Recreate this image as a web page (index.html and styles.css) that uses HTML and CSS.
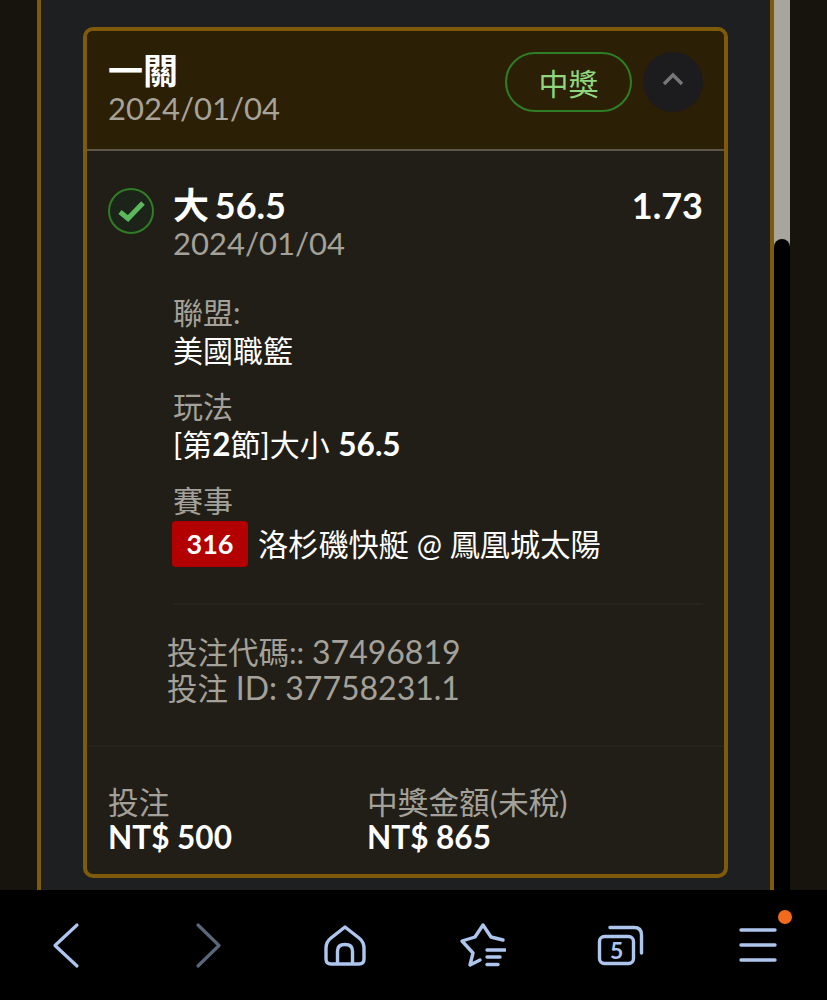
FILE: index.html
```html
<!DOCTYPE html>
<html lang="zh-TW">
<head>
  <meta charset="UTF-8" />
  <meta name="viewport" content="width=device-width, initial-scale=1.0"/>
  <title>投注紀錄</title>
  <link rel="stylesheet" href="styles.css">
</head>
<body>
  <div class="screen">
    <div class="side-left"></div>
    <main class="panel">
      <section class="bet-card">
        <header class="bet-head">
          <div class="bet-head-text">
            <div class="bet-type">一關</div>
            <div class="bet-date">2024/01/04</div>
          </div>
          <span class="win-pill">中獎</span>
          <button class="collapse-btn" aria-label="收合">
            <svg width="24" height="16" viewBox="0 0 24 16"><path d="M3 13 L12 4 L21 13" fill="none" stroke="#77777a" stroke-width="3.4"/></svg>
          </button>
        </header>

        <div class="bet-body">
          <div class="pick-row">
            <svg class="pick-check" width="46" height="46" viewBox="0 0 46 46">
              <circle cx="23" cy="23" r="22" fill="#1c2419" stroke="#2f7d24" stroke-width="2"/>
              <path d="M12 24 L20 30.5 L35 15" fill="none" stroke="#5cb85c" stroke-width="5"/>
            </svg>
            <div class="pick-main">
              <div class="pick-top">
                <span class="pick-name">大 56.5</span>
                <span class="pick-odds">1.73</span>
              </div>
              <div class="pick-date">2024/01/04</div>
              <div class="info-block">
                <div class="info-label">聯盟:</div>
                <div class="info-value">美國職籃</div>
              </div>
              <div class="info-block">
                <div class="info-label">玩法</div>
                <div class="info-value">[第<b>2</b>節]大小 <b>56.5</b></div>
              </div>
              <div class="info-block">
                <div class="info-label">賽事</div>
                <div class="info-value match">
                  <span class="match-no">316</span>
                  <span>洛杉磯快艇 @ 鳳凰城太陽</span>
                </div>
              </div>
            </div>
          </div>

          <div class="bet-ids">
            <div>投注代碼:: <span class="bet-num">37496819</span></div>
            <div>投注 <span class="bet-num">ID: 37758231.1</span></div>
          </div>
        </div>

        <footer class="bet-foot">
          <div class="foot-col">
            <div class="foot-label">投注</div>
            <div class="foot-value">NT$ 500</div>
          </div>
          <div class="foot-col">
            <div class="foot-label">中獎金額(未稅)</div>
            <div class="foot-value">NT$ 865</div>
          </div>
        </footer>
      </section>
    </main>
    <div class="scrollbar"><div class="scroll-thumb"></div></div>
    <div class="side-right"></div>
  </div>

  <nav class="browser-bar">
    <svg width="48" height="48" viewBox="0 0 48 48"><path d="M34 4 L12 24.5 L34 45" fill="none" stroke="#aec6ee" stroke-width="3.2" stroke-linecap="round" stroke-linejoin="round"/></svg>
    <svg width="48" height="48" viewBox="-3 0 48 48"><path d="M14 4 L35 24.5 L14 45" fill="none" stroke="#5a6779" stroke-width="3.2" stroke-linecap="round" stroke-linejoin="round"/></svg>
    <svg width="48" height="48" viewBox="-2 0 48 48">
      <path d="M24 6 L38 17 Q43 21 43 27 L43 38 Q43 43 38 43 L10 43 Q5 43 5 38 L5 27 Q5 21 10 17 Z" fill="none" stroke="#aec6ee" stroke-width="3.4" stroke-linejoin="round"/>
      <path d="M16.5 43 L16.5 30 Q16.5 23.5 24 23.5 Q31.5 23.5 31.5 30 L31.5 43" fill="none" stroke="#aec6ee" stroke-width="3.4"/>
    </svg>
    <svg width="48" height="48" viewBox="-1 0 48 48">
      <path d="M44 19 L32 16 L24 4 L16 16 L3 20 L14 32 L11 44 L21 39" fill="none" stroke="#aec6ee" stroke-width="3.4" stroke-linecap="round" stroke-linejoin="round"/>
      <path d="M28 29 H46 M28 36 H41 M28 43.5 H39" fill="none" stroke="#aec6ee" stroke-width="3.4" stroke-linecap="round"/>
    </svg>
    <div class="tabs-icon">
      <svg width="48" height="48" viewBox="0 0 48 48">
        <path d="M14 6.5 H38 Q45.5 6.5 45.5 14 V32" fill="none" stroke="#aec6ee" stroke-width="3.4" stroke-linecap="round"/>
        <rect x="3.5" y="15.5" width="34" height="27" rx="5" fill="none" stroke="#aec6ee" stroke-width="3.4"/>
      </svg>
      <span class="tabs-count">5</span>
    </div>
    <div class="menu-icon">
      <svg width="48" height="48" viewBox="0 0 48 48"><path d="M7 9 H41 M7 24 H41 M7 39 H41" fill="none" stroke="#aec6ee" stroke-width="3.4" stroke-linecap="round"/></svg>
      <span class="menu-dot"></span>
    </div>
  </nav>
</body>
</html>
```

FILE: styles.css
```css
html, body {
  margin: 0;
  padding: 0;
  height: 100%;
  background: #000;
  overflow: hidden;
  font-family: 'Lato', 'Noto Sans CJK TC', sans-serif;
}
.screen {
  display: flex;
  height: 890px;
  overflow: hidden;
}
.side-left, .side-right {
  background: #17140d;
  width: 37px;
}
.panel {
  width: 737px;
  box-sizing: border-box;
  background: #1e1f21;
  border-left: 4px solid #7f5a0b;
  border-right: 4px solid #7f5a0b;
  padding: 27px 42px 0 42px;
}
.scrollbar {
  width: 16px;
  background: #a8a59c;
  display: flex;
  flex-direction: column;
}
.scroll-thumb {
  margin-top: 239px;
  flex: 1;
  background: #000;
  border-radius: 8px 8px 0 0;
}
/* -- CARD -- */
.bet-card {
  box-sizing: border-box;
  height: 851px;
  border: 4px solid #7f5a0b;
  border-radius: 10px;
  background: #211e17;
  display: flex;
  flex-direction: column;
}
.bet-head {
  display: flex;
  align-items: flex-start;
  height: 120px;
  box-sizing: border-box;
  padding: 21px 21px 0 21px;
  background: #2b1f05;
  border-radius: 6px 6px 0 0;
  border-bottom: 2px solid #5c5646;
}
.bet-head-text { flex: 1; }
.bet-type {
  font-size: 35px;
  font-weight: 700;
  line-height: 36px;
  color: #fff;
}
.bet-date {
  margin-top: 2px;
  font-size: 31px;
  line-height: 36px;
  color: #a8a398;
}
.win-pill {
  box-sizing: border-box;
  width: 127px;
  height: 60px;
  border: 2px solid #2f7d24;
  border-radius: 30px;
  display: flex;
  align-items: center;
  justify-content: center;
  font-size: 30px;
  color: #8fd67f;
}
.collapse-btn {
  width: 60px;
  height: 60px;
  margin-left: 11px;
  border: none;
  border-radius: 50%;
  background: #1c1c1e;
  padding: 0 0 6px 0;
  display: flex;
  align-items: center;
  justify-content: center;
}
.bet-body {
  flex: 1;
  padding: 0 21px;
}
.pick-row {
  display: flex;
  gap: 19px;
  padding-top: 37px;
  align-items: flex-start;
}
.pick-check { flex-shrink: 0; }
.pick-main {
  flex: 1;
  margin-top: -3px;
  padding-bottom: 36px;
  border-bottom: 2px solid #27241d;
}
.pick-top {
  display: flex;
  justify-content: space-between;
  font-size: 36px;
  font-weight: 700;
  line-height: 40px;
  color: #fff;
}
.pick-name { word-spacing: -3px; }
.pick-date {
  font-size: 31px;
  line-height: 36px;
  color: #a3a199;
}
.info-block { margin-top: 32px; }
.info-block + .info-block { margin-top: 18px; }
.info-label {
  font-size: 30px;
  line-height: 38px;
  color: #a3a199;
}
.info-value {
  font-size: 30px;
  line-height: 38px;
  color: #fff;
  word-spacing: 1px;
}
.info-value b { font-size: 31.5px; }
.match {
  display: flex;
  align-items: center;
  gap: 10px;
  font-size: 30.2px;
  margin: 2px 0 0 -1px;
  word-spacing: 0;
}
.match-no {
  width: 76px;
  height: 46px;
  border-radius: 4px;
  background: #b30000;
  display: flex;
  align-items: center;
  justify-content: center;
  font-size: 27px;
  font-weight: 700;
}
.bet-ids {
  padding: 29px 0 0 0;
  margin-left: 59px;
  font-size: 30.5px;
  line-height: 35px;
  color: #a3a199;
}
.bet-num { font-size: 32px; }
.bet-foot {
  display: flex;
  height: 129px;
  box-sizing: border-box;
  padding: 38px 21px 0 21px;
  border-top: 2px solid #27241d;
}
.foot-col:first-child { width: 259px; }
.foot-label {
  font-size: 30.7px;
  line-height: 35px;
  color: #a3a199;
}
.foot-value {
  font-size: 31.5px;
  font-weight: 700;
  line-height: 34px;
  color: #fff;
}
/* -- BROWSER BAR -- */
.browser-bar {
  height: 110px;
  background: #000;
  display: flex;
  align-items: center;
  justify-content: space-between;
  padding: 0 45px 0 43px;
}
.tabs-icon, .menu-icon {
  position: relative;
  width: 48px;
  height: 48px;
}
.tabs-count {
  position: absolute;
  left: 8px;
  top: 14px;
  width: 26px;
  text-align: center;
  font-size: 23px;
  line-height: 30px;
  font-weight: 700;
  color: #aec6ee;
}
.menu-dot {
  position: absolute;
  right: -10px;
  top: -11px;
  width: 14px;
  height: 14px;
  border-radius: 50%;
  background: #f26a1b;
}
```
